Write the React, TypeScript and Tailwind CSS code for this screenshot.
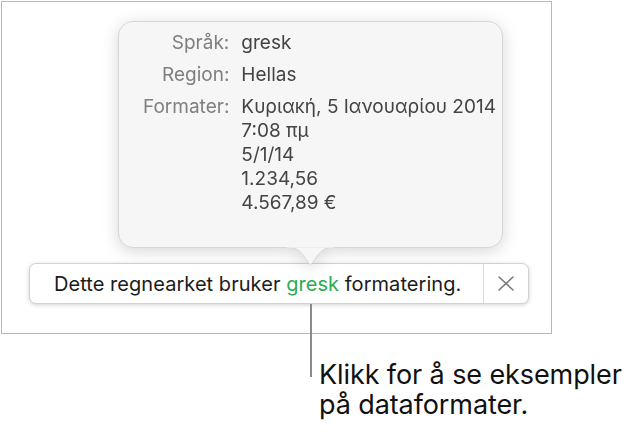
import React from 'react';

const rows = [
  { label: 'Språk:', values: ['gresk'] },
  { label: 'Region:', values: ['Hellas'] },
  {
    label: 'Formater:',
    values: ['Κυριακή, 5 Ιανουαρίου 2014', '7:08 πμ', '5/1/14', '1.234,56', '4.567,89 €'],
  },
];

function App() {
  return (
    <div className="relative w-[638px] h-[438px] bg-white font-['Inter','Liberation_Sans',sans-serif] overflow-hidden">
      {/* Window frame */}
      <div className="ml-px mt-px w-[551px] h-[333px] border border-[#b8b8b8] bg-white">
        {/* Language banner */}
        <div className="ml-[27px] mt-[261px] w-[500px] h-[41px] flex items-stretch rounded-[7px] border border-[#d2d2d2] bg-white shadow-[0_1px_4px_rgba(0,0,0,0.18)]">
          <div className="flex-1 flex items-center pl-6 text-[20px] text-[#1b1b1b] tracking-[0.05px]">
            Dette regnearket bruker&nbsp;<span className="text-[#2bab4f]">gresk</span>&nbsp;formatering.
          </div>
          <div className="w-[45px] border-l border-[#dcdcdc] flex items-center justify-center">
            <svg width="16" height="15" viewBox="0 0 16 15" fill="none">
              <path d="M1 1 L15 14 M15 1 L1 14" stroke="#7b7b7b" strokeWidth="1.6" strokeLinecap="round" />
            </svg>
          </div>
        </div>
      </div>

      {/* Popover with format examples */}
      <div className="absolute left-[118px] top-[21px] drop-shadow-[0_3px_8px_rgba(0,0,0,0.16)]">
        <div className="w-[385px] h-[227px] rounded-[15px] border border-[#d6d6d6] bg-[#f6f6f6] pl-[24px] pt-[9px]">
          <div className="grid grid-cols-[auto_1fr] gap-x-3 gap-y-2 text-[19px] leading-6">
            {rows.map((row) => (
              <React.Fragment key={row.label}>
                <div className="text-right text-[#7f7f7f]">{row.label}</div>
                <div className="text-[#444444]">
                  {row.values.map((v) => (
                    <div key={v}>{v}</div>
                  ))}
                </div>
              </React.Fragment>
            ))}
          </div>
        </div>
        <svg className="absolute left-[169px] top-[225px]" width="47" height="20" viewBox="0 0 47 20">
          <path d="M0 1.5 C9 1.5 12 4 16 9 L22 17.5 Q23.5 19 25 17.5 L31 9 C35 4 38 1.5 47 1.5" fill="#f6f6f6" stroke="#d6d6d6" strokeWidth="1" />
          <rect x="0" y="0" width="47" height="1.6" fill="#f6f6f6" />
        </svg>
      </div>

      {/* Callout annotation */}
      <div className="absolute left-[310px] top-[304px] flex">
        <div className="w-[2px] h-[73px] bg-[#8a8a8a]" />
        <div className="ml-[7px] mt-[56px] text-[27px] leading-[30px] text-[#111111] tracking-[-0.1px]">
          <div>Klikk for å se eksempler</div>
          <div>på dataformater.</div>
        </div>
      </div>
    </div>
  );
}

export default App;
